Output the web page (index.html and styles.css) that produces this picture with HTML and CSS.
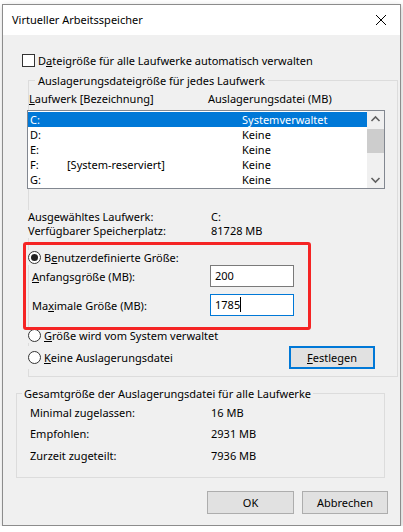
FILE: index.html
```html
<!DOCTYPE html>
<html lang="de">
<head>
<meta charset="utf-8">
<title>Virtueller Arbeitsspeicher</title>
<link rel="stylesheet" href="styles.css">
</head>
<body>
<div class="window">
  <div class="titlebar">
    <span class="title">Virtueller Arbeitsspeicher</span>
    <svg class="close" width="12" height="12" viewBox="0 0 12 12"><path d="M1 1 L11 11 M11 1 L1 11" stroke="#000" stroke-width="1" fill="none"/></svg>
  </div>
  <div class="content">
    <div class="check-row">
      <span class="checkbox"></span>
      <span>D<u>a</u>teigröße für alle Laufwerke automatisch verwalten</span>
    </div>

    <div class="group group-drives">
      <div class="legend">Auslagerungsdateigröße für jedes Laufwerk</div>
      <div class="list-head">
        <span class="col-a"><u>L</u>aufwerk [Bezeichnung]</span>
        <span>Auslagerungsdatei (MB)</span>
      </div>
      <div class="listbox">
        <div class="rows">
          <div class="row selected"><span>C:</span><span></span><span>Systemverwaltet</span></div>
          <div class="row"><span>D:</span><span></span><span>Keine</span></div>
          <div class="row"><span>E:</span><span></span><span>Keine</span></div>
          <div class="row"><span>F:</span><span>[System-reserviert]</span><span>Keine</span></div>
          <div class="row"><span>G:</span><span></span><span>Keine</span></div>
        </div>
        <div class="scrollbar">
          <div class="sb-btn"><svg width="17" height="17" viewBox="0 0 17 17"><path d="M4.5 10 L8.5 6 L12.5 10" stroke="#606060" stroke-width="1.6" fill="none"/></svg></div>
          <div class="sb-thumb"></div>
          <div class="sb-space"></div>
          <div class="sb-btn"><svg width="17" height="17" viewBox="0 0 17 17"><path d="M4.5 7 L8.5 11 L12.5 7" stroke="#606060" stroke-width="1.6" fill="none"/></svg></div>
        </div>
      </div>

      <div class="info-row info-first"><span class="info-label">Ausgewähltes Laufwerk:</span><span>C:</span></div>
      <div class="info-row"><span class="info-label">Verfügbarer Speicherplatz:</span><span>81728 MB</span></div>

      <div class="custom">
        <div class="radio-row radio-first">
          <span class="radio checked"></span>
          <span>B<u>e</u>nutzerdefinierte Größe:</span>
        </div>
        <div class="field-row">
          <span class="field-label"><u>A</u>nfangsgröße (MB):</span>
          <span class="input">200</span>
        </div>
        <div class="field-row field-second">
          <span class="field-label">Ma<u>x</u>imale Größe (MB):</span>
          <span class="input focused"><span class="caret">1785</span></span>
        </div>
      </div>

      <div class="radio-row radio-second">
        <span class="radio"></span>
        <span><u>G</u>röße wird vom System verwaltet</span>
      </div>
      <div class="radio-row radio-third">
        <span class="radio"></span>
        <span><u>K</u>eine Auslagerungsdatei</span>
        <span class="button default"><u>F</u>estlegen</span>
      </div>
    </div>

    <div class="group group-total">
      <div class="legend">Gesamtgröße der Auslagerungsdatei für alle Laufwerke</div>
      <div class="total-row t1"><span class="total-label">Minimal zugelassen:</span><span>16 MB</span></div>
      <div class="total-row t2"><span class="total-label">Empfohlen:</span><span>2931 MB</span></div>
      <div class="total-row t3"><span class="total-label">Zurzeit zugeteilt:</span><span>7936 MB</span></div>
    </div>

    <div class="buttons">
      <span class="button ok">OK</span>
      <span class="button cancel">Abbrechen</span>
    </div>
  </div>
</div>
</body>
</html>
```
FILE: styles.css
```css
* { box-sizing: border-box; }
html, body { margin: 0; padding: 0; background: #ffffff; }
body {
  font-family: "Noto Sans", "Open Sans", sans-serif;
  font-size: 11px;
  color: #000;
}
u { text-decoration: underline; text-underline-offset: 1px; }

.window {
  margin: 4px 0 0 2px;
  width: 399px;
  border: 1px solid #8c8c8c;
  box-shadow: 1px 2px 6px rgba(0,0,0,0.22);
  background: #f0f0f0;
}
.titlebar {
  height: 30px;
  background: #ffffff;
  display: flex;
  align-items: center;
  padding-left: 9px;
  padding-right: 12px;
}
.title { flex: 1; font-size: 11px; line-height: 30px; }
.close { display: block; margin-right: 1px; }

.content {
  height: 490px;
  padding-top: 17px;
}

.check-row {
  height: 16px;
  display: flex;
  align-items: center;
  margin-left: 19px;
  gap: 3px;
}
.checkbox {
  width: 13px; height: 13px;
  border: 1px solid #333;
  background: #fff;
}

.group {
  border: 1px solid #dcdcdc;
}
.legend {
  width: fit-content;
  height: 16px;
  line-height: 16px;
  margin-top: -8px;
  background: #f0f0f0;
}
.group-drives {
  margin-top: 12px;
  margin-left: 25px;
  width: 370px;
  padding-bottom: 7px;
}
.group-drives .legend { margin-left: 6px; padding: 0 3px; }

.list-head {
  margin-top: 2px;
  height: 16px;
  line-height: 16px;
  display: flex;
}
.col-a { width: 179px; }

.listbox {
  margin-top: 3px;
  margin-left: -2px;
  width: 358px;
  height: 79px;
  border: 1px solid #828790;
  background: #fff;
  display: flex;
}
.rows {
  width: 339px;
  padding: 1px 0;
}
.row {
  height: 15px;
  line-height: 15px;
  display: grid;
  grid-template-columns: 37px 175px 1fr;
  padding-left: 2px;
}
.row.selected { background: #0078d7; color: #fff; }
.scrollbar {
  width: 17px;
  background: #f0f0f0;
  display: flex;
  flex-direction: column;
}
.sb-btn { height: 17px; }
.sb-btn svg { display: block; }
.sb-thumb { height: 24px; margin-top: 1px; background: #cdcdcd; }
.sb-space { flex: 1; }

.info-row {
  height: 14px;
  line-height: 14px;
  display: flex;
  margin-left: -1px;
  background: #f0f0f0;
  width: fit-content;
}
.info-first { margin-top: 21px; }
.info-label { width: 183px; }

.custom {
  position: relative;
  margin-top: 12px;
}
.custom::after {
  content: "";
  position: absolute;
  top: -8px;
  left: -6px;
  width: 282px;
  height: 82px;
  border: 3px solid #f52424;
  border-radius: 3px;
  pointer-events: none;
}

.radio-row {
  display: flex;
  align-items: center;
  gap: 3px;
  margin-left: -1px;
  background: #f0f0f0;
}
.radio-first { height: 15px; width: fit-content; }
.radio-second { height: 16px; margin-top: 11px; width: fit-content; }
.radio-third { height: 23px; margin-top: 3px; }
.radio {
  width: 13px; height: 13px;
  border: 1px solid #333;
  border-radius: 50%;
  background: #fff;
  display: flex;
  align-items: center;
  justify-content: center;
}
.radio.checked::before {
  content: "";
  width: 7px; height: 7px;
  border-radius: 50%;
  background: #222;
}

.field-row {
  height: 22px;
  display: flex;
  align-items: center;
  margin-left: -1px;
}
.field-second { margin-top: 7px; }
.field-label { width: 182px; padding-left: 4px; }
.input {
  width: 84px;
  height: 22px;
  border: 1px solid #7a7a7a;
  background: #fff;
  line-height: 20px;
  padding-left: 4px;
}
.input.focused { border-color: #0078d7; }
.caret { border-right: 1px solid #000; padding-right: 0; }

.button {
  display: flex;
  align-items: center;
  justify-content: center;
  height: 23px;
  border: 1px solid #adadad;
  background: #e1e1e1;
}
.button.default {
  width: 86px;
  margin-left: auto;
  margin-right: 22px;
  border: 2px solid #0078d7;
}

.group-total {
  margin-top: 16px;
  margin-left: 13px;
  width: 369px;
  padding-left: 13px;
  padding-bottom: 14px;
}
.group-total .legend { margin-left: -8px; padding: 0 2px; }
.total-row {
  height: 14px;
  line-height: 14px;
  display: flex;
}
.t1 { margin-top: 4px; }
.t2 { margin-top: 7px; }
.t3 { margin-top: 8px; }
.total-label { width: 181px; }

.buttons {
  margin-top: 13px;
  display: flex;
  justify-content: flex-end;
  gap: 8px;
  padding-right: 12px;
}
.ok { width: 87px; }
.cancel { width: 86px; }
```
